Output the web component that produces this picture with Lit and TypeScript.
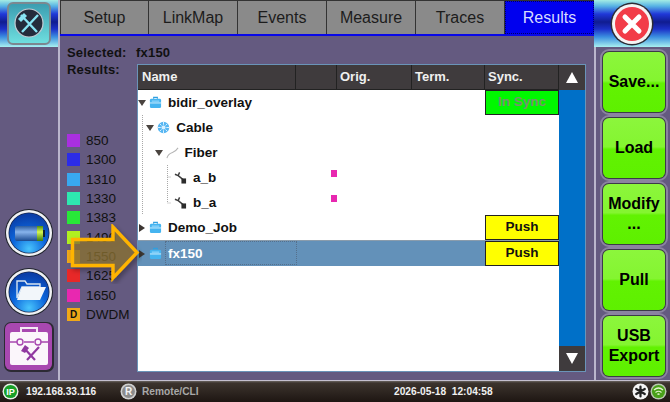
import {LitElement, html, css, svg} from 'lit';
import {customElement} from 'lit/decorators.js';

const TABS = ['Setup', 'LinkMap', 'Events', 'Measure', 'Traces', 'Results'];
const LEGEND = [
	['850', '#a930e0'],
	['1300', '#2c2ce8'],
	['1310', '#38a8f0'],
	['1330', '#2ee8b0'],
	['1383', '#28e838'],
	['1490', '#b0f020'],
	['1550', '#f0a818'],
	['1625', '#e82828'],
	['1650', '#e828b0'],
];
const ACTIONS = [['Save...'], ['Load'], ['Modify', '...'], ['Pull'], ['USB', 'Export']];

type Row = {
	name: string;
	level: number;
	kind: 'job' | 'cable' | 'fiber' | 'trace';
	open?: boolean;
	mark?: boolean;
	sync?: string;
	selected?: boolean;
};

const ROWS: Row[] = [
	{name: 'bidir_overlay', level: 0, kind: 'job', open: true, sync: 'In Sync'},
	{name: 'Cable', level: 1, kind: 'cable', open: true},
	{name: 'Fiber', level: 2, kind: 'fiber', open: true},
	{name: 'a_b', level: 3, kind: 'trace', mark: true},
	{name: 'b_a', level: 3, kind: 'trace', mark: true},
	{name: 'Demo_Job', level: 0, kind: 'job', open: false, sync: 'Push'},
	{name: 'fx150', level: 0, kind: 'job', open: false, sync: 'Push', selected: true},
];

const jobIcon = html`<svg class="node" viewBox="0 0 14 14">
	<path d="M5 3V1.500h4V3" fill="none" stroke="#2f9fe0" stroke-width="1.200" />
	<rect x="1" y="3" width="12" height="10" rx="1.500" fill="#45b4f0" />
	<rect x="1" y="7" width="12" height="1" fill="#d8f2ff" />
	<rect x="3" y="5" width="8" height="1" fill="#a8e0ff" />
</svg>`;
const cableIcon = html`<svg class="node" viewBox="0 0 14 14">
	<circle cx="7" cy="7" r="6.200" fill="#56b6f2" />
	<circle cx="7" cy="7" r="2.200" fill="#d8f0ff" />
	<path d="M7 1v3M7 10v3M1 7h3M10 7h3M2.800 2.800l2 2M9.200 9.200l2 2M11.200 2.800l-2 2M4.800 9.200l-2 2" stroke="#e4f4ff" stroke-width="1" />
</svg>`;
const fiberIcon = html`<svg class="node" viewBox="0 0 14 14">
	<path d="M1 13c1-4 3-5 6-6s4-2 6-5" fill="none" stroke="#b4b4b4" stroke-width="1.100" />
</svg>`;
const traceIcon = html`<svg class="node" viewBox="0 0 14 14">
	<path d="M1 3.500l3.500 1.500L6 1.500M4.500 5l5 4" fill="none" stroke="#3c3c3c" stroke-width="1.500" />
	<rect x="8" y="8" width="5" height="5.500" fill="#2c2c2c" />
</svg>`;
const ICONS = {job: jobIcon, cable: cableIcon, fiber: fiberIcon, trace: traceIcon};

const orb = (id: string, glyph: unknown) => html`<svg class="orb" viewBox="0 0 48 50">
	<defs>
		<radialGradient id=${id} cx="50%" cy="90%" r="85%">
			<stop offset="0" stop-color="#48c4fc" />
			<stop offset=".5" stop-color="#0c66dc" />
			<stop offset="1" stop-color="#0a3ea8" />
		</radialGradient>
	</defs>
	<circle cx="24" cy="25" r="24" fill="#20242c" />
	<circle cx="24" cy="25" r="23" fill="#f0f2f4" />
	<circle cx="24" cy="25" r="20.500" fill="#182850" />
	<circle cx="24" cy="25" r="19.700" fill="url(#${id})" />
	${glyph}
</svg>`;

const batteryGlyph = svg`
	<defs>
		<linearGradient id="cell" x1="0" y1="0" x2="0" y2="1">
			<stop offset="0" stop-color="#2a5ca0" />
			<stop offset=".4" stop-color="#88b4ec" />
			<stop offset="1" stop-color="#1a4a90" />
		</linearGradient>
		<linearGradient id="charge" x1="0" y1="0" x2="0" y2="1">
			<stop offset="0" stop-color="#4a8a10" />
			<stop offset=".4" stop-color="#d8f850" />
			<stop offset="1" stop-color="#3a7a10" />
		</linearGradient>
	</defs>
	<rect x="10" y="18" width="28" height="15" rx="2" fill="url(#cell)" />
	<rect x="32" y="18" width="6" height="15" fill="url(#charge)" />
	<rect x="38" y="22" width="2" height="7" fill="#123" />`;

const folderGlyph = svg`
	<path d="M12 31V14h8l2 3h13v3H17z" fill="none" stroke="#d8e4f0" stroke-width="1.400" />
	<path d="M12 33l5-13h24l-6 13z" fill="#f2f6fa" />`;

@customElement('app-root')
export class AppRoot extends LitElement {
	static styles = css`
		:host {
			display: grid;
			grid-template-rows: 380px 22px;
			width: 670px;
			height: 402px;
			position: relative;
			overflow: hidden;
			font-family: "Liberation Sans", Arial, sans-serif;
			background: #645a80;
			color: #000;
		}

		.body {
			display: grid;
			grid-template-columns: 60px 534px 76px;
			min-height: 0;
		}

		/* side columns */
		.left {
			display: flex;
			flex-direction: column;
			align-items: center;
			border-right: 2px solid #bab6cc;
		}
		.cap {
			align-self: stretch;
			height: 47px;
			flex: none;
			display: flex;
			align-items: center;
			justify-content: center;
			background: linear-gradient(#a4ece4 0, #58b4e4 6px, #2038d8 14px, #101c90 22px, #1c30c8 29px, #3c90e0 37px, #a8f0f0 47px);
		}
		.left .cap svg {
			width: 44px;
			height: 43px;
		}
		.orbs {
			margin-top: auto;
			display: flex;
			flex-direction: column;
			align-items: center;
			gap: 9px;
			margin-bottom: 7px;
		}
		.orb {
			width: 48px;
			height: 50px;
			display: block;
		}
		.toolbox {
			width: 52px;
			height: 52px;
			display: block;
			margin-top: -5px;
		}

		.right {
			display: flex;
			flex-direction: column;
		}
		.right .cap svg {
			width: 44px;
			height: 44px;
		}
		.actions {
			flex: 1;
			display: flex;
			flex-direction: column;
			padding: 2px 0 0 4px;
			border-left: 2px solid #bab6cc;
		}
		.action {
			width: 68px;
			height: 66px;
			flex: none;
			box-sizing: border-box;
			border: 2px solid #8b84a0;
			border-radius: 9px;
			padding: 1px;
			background: #3c3a48;
			display: flex;
		}
		.action span {
			flex: 1;
			border-radius: 6px;
			background: linear-gradient(#8cf63c 0, #84f530 48%, #62f202 52%, #5ef000 100%);
			display: flex;
			flex-direction: column;
			align-items: center;
			justify-content: center;
			font-size: 16px;
			line-height: 20px;
			font-weight: 700;
			text-align: center;
		}

		/* centre */
		.main {
			display: flex;
			flex-direction: column;
			min-width: 0;
		}
		.tabs {
			display: grid;
			grid-template-columns: repeat(6, 1fr);
			height: 33px;
			flex: none;
			border-top: 1px solid #333;
			border-bottom: 2px solid #0808e8;
		}
		.tab {
			display: flex;
			align-items: center;
			justify-content: center;
			background: #8a8a8a;
			border-right: 1px solid #333;
			font-size: 16px;
			color: #1c1c1c;
		}
		.tab:first-child {
			border-left: 1px solid #333;
		}
		.tab.on {
			background: #0000ee;
			color: #d8dcff;
			border: 1px dotted #000060;
		}
		.selected {
			display: flex;
			height: 15px;
			margin-top: 9px;
			padding-left: 7px;
			font-size: 13px;
			font-weight: 700;
			line-height: 15px;
			letter-spacing: .2px;
			color: #111;
		}
		.selected b {
			width: 69px;
		}
		.content {
			display: grid;
			grid-template-columns: 77px 449px;
			margin-top: 4px;
			min-height: 0;
		}
		.legend-col {
			padding-left: 7px;
		}
		.results {
			font-size: 13px;
			font-weight: 700;
			letter-spacing: .2px;
			line-height: 15px;
			margin-top: -2px;
			color: #111;
		}
		.legend {
			margin-top: 54px;
			display: flex;
			flex-direction: column;
		}
		.legend div {
			height: 19.300px;
			display: flex;
			align-items: center;
			gap: 6px;
			font-size: 13.500px;
			color: #111;
		}
		.swatch {
			width: 13px;
			height: 13px;
			flex: none;
			font-size: 10px;
			font-weight: 700;
			line-height: 13px;
			text-align: center;
		}

		/* table */
		.table {
			height: 308px;
			box-sizing: border-box;
			border: 1px solid #6a94b8;
			display: grid;
			grid-template-columns: 421px 26px;
			grid-template-rows: 25px 1fr;
			background: #fff;
		}
		.head {
			display: grid;
			grid-template-columns: 158px 41px 75px 73px 74px;
			background: #3f3b3d;
			color: #f0f0f0;
			font-size: 13px;
			font-weight: 700;
			line-height: 24px;
		}
		.head span {
			padding-left: 3px;
			border-right: 1px solid #222;
			border-bottom: 1px solid #222;
		}
		.head span:first-child {
			padding-left: 4px;
		}
		.up, .down {
			background: #3f3b3d;
			display: flex;
			align-items: center;
			justify-content: center;
		}
		.up i, .down i {
			width: 0;
			height: 0;
			border-left: 6.500px solid transparent;
			border-right: 6.500px solid transparent;
		}
		.up i {
			border-bottom: 11px solid #fff;
		}
		.down i {
			border-top: 11px solid #fff;
		}
		.tree {
			position: relative;
			min-height: 0;
		}
		.guides {
			position: absolute;
			left: 0;
			top: 0;
			width: 40px;
			height: 130px;
			pointer-events: none;
		}
		.row {
			display: grid;
			grid-template-columns: 158px 41px 1fr 74px;
			height: 25px;
			align-items: stretch;
		}
		.row.sel {
			background: #6391b9;
			color: #fff;
			border-top: 1px solid #8a9cac;
		}
		.name {
			display: flex;
			align-items: center;
			font-size: 13.500px;
			font-weight: 700;
			color: #111;
			position: relative;
		}
		.sel .name {
			color: #fff;
		}
		.sel .name::after {
			content: "";
			position: absolute;
			left: 27px;
			right: -1px;
			top: 0;
			bottom: 1px;
			border: 1px dotted #55708c;
		}
		.twist {
			width: 0;
			height: 0;
			flex: none;
			margin-right: 3px;
		}
		.twist.open {
			border-left: 4px solid transparent;
			border-right: 4px solid transparent;
			border-top: 6px solid #4a4440;
		}
		.twist.shut {
			margin-left: 1px;
			margin-right: 4px;
			border-top: 4.500px solid transparent;
			border-bottom: 4.500px solid transparent;
			border-left: 6px solid #3c3632;
		}
		.node {
			width: 13px;
			height: 13px;
			flex: none;
			margin-right: 6px;
		}
		.markcell {
			display: flex;
			justify-content: flex-end;
			align-items: center;
		}
		.mark {
			width: 6px;
			height: 7px;
			background: #e828b0;
			margin-bottom: 8px;
		}
		.sync {
			box-sizing: border-box;
			border: 1px solid #222;
			text-align: center;
			font-size: 13.500px;
			font-weight: 700;
			line-height: 22px;
		}
		.sync.push {
			background: #ffff00;
			color: #111;
		}
		.sync.ok {
			background: #00f800;
			color: #789070;
		}
		.bar {
			background: #0070c8;
			display: flex;
			flex-direction: column;
			justify-content: flex-end;
		}
		.down {
			height: 25px;
		}

		/* pointer laid over the legend */
		.arrow {
			position: absolute;
			left: 68px;
			top: 224px;
			width: 74px;
			height: 60px;
		}

		/* status strip */
		.status {
			background: linear-gradient(#6a6460 0, #3c342e 2px, #1e1612 100%);
			border-top: 1px solid #c4c0d0;
			display: flex;
			align-items: center;
			font-size: 10.200px;
			font-weight: 700;
			color: #f0f0f0;
			padding-left: 2px;
			box-sizing: border-box;
		}
		.status svg {
			width: 17px;
			height: 17px;
			flex: none;
		}
		.ip {
			margin-left: 7px;
			width: 94px;
		}
		.remote {
			margin-left: 5px;
			width: 252px;
			color: #a8a8a8;
		}
		.clock {
			width: 238px;
		}
		.status .end {
			margin-left: 1px;
		}
	`;

	renderRow(r: Row) {
		const twist = r.kind === 'trace' ? 11 : 0;
		return html`<div class="row ${r.selected ? 'sel' : ''}">
			<div class="name" style="padding-left: ${r.level * 8.3 + twist}px">
				${r.kind === 'trace' ? '' : html`<i class="twist ${r.open ? 'open' : 'shut'}"></i>`}
				${ICONS[r.kind]}
				<span>${r.name}</span>
			</div>
			<div class="markcell">${r.mark ? html`<i class="mark"></i>` : ''}</div>
			<div></div>
			${r.sync
				? html`<div class="sync ${r.sync === 'Push' ? 'push' : 'ok'}">${r.sync}</div>`
				: html`<div></div>`}
		</div>`;
	}

	render() {
		return html`
			<div class="body">
				<div class="left">
					<div class="cap">
						<svg viewBox="0 0 44 43">
							<defs>
								<linearGradient id="tile" x1="0" y1="0" x2="0" y2="1">
									<stop offset="0" stop-color="#3a9cb0" />
									<stop offset="1" stop-color="#70e0e0" />
								</linearGradient>
							</defs>
							<rect x="1" y="1" width="42" height="41" rx="5" fill="url(#tile)" stroke="#7c8890" stroke-width="2" />
							<circle cx="22" cy="21" r="14" fill="#242c3c" stroke="#c4ccd4" stroke-width="1.200" />
							<path d="M14 13l16 17M31 13L15 30" stroke="#88e4f4" stroke-width="2.400" />
							<path d="M11 17l6-6 3 3-6 6z" fill="#88e4f4" />
						</svg>
					</div>
					<div class="orbs">
						${orb('orb-a', batteryGlyph)}
						${orb('orb-b', folderGlyph)}
						<svg class="toolbox" viewBox="0 0 52 52">
							<rect x="1" y="1" width="50" height="50" rx="7" fill="#2c2a34" />
							<rect x="2" y="2" width="47" height="47" rx="6" fill="#a848b0" />
							<path d="M18 11V7h16v4" fill="none" stroke="#f4e8f4" stroke-width="2" />
							<rect x="7" y="11" width="38" height="33" rx="2" fill="#fbf6fb" />
							<path d="M7 21h7M21 21h10M38 21h7" stroke="#a848b0" stroke-width="1.400" />
							<circle cx="17" cy="21" r="3" fill="none" stroke="#a848b0" stroke-width="1.400" />
							<circle cx="35" cy="21" r="3" fill="none" stroke="#a848b0" stroke-width="1.400" />
							<path d="M21 27l11 12M36 26L24 39" stroke="#9038a0" stroke-width="2.200" />
							<path d="M18 30l4-6 4 3-4 5z" fill="#9038a0" />
						</svg>
					</div>
				</div>

				<div class="main">
					<div class="tabs">
						${TABS.map((t) => html`<div class="tab ${t === 'Results' ? 'on' : ''}">${t}</div>`)}
					</div>
					<div class="selected"><b>Selected:</b><span>fx150</span></div>
					<div class="content">
						<div class="legend-col">
							<div class="results">Results:</div>
							<div class="legend">
								${LEGEND.map(([label, color]) => html`<div>
									<i class="swatch" style="background: ${color}"></i>${label}
								</div>`)}
								<div><i class="swatch" style="background: #f0a818; font-style: normal">D</i>DWDM</div>
							</div>
						</div>
						<div class="table">
							<div class="head">
								<span>Name</span><span></span><span>Orig.</span><span>Term.</span><span>Sync.</span>
							</div>
							<div class="up"><i></i></div>
							<div class="tree">
								<svg class="guides" viewBox="0 0 40 130">
									<path d="M4.500 25V125M29.500 75V113M29.500 87H33M29.500 113H33" fill="none" stroke="#a8a8a8" stroke-dasharray="1 1" />
								</svg>
								${ROWS.map((r) => this.renderRow(r))}
							</div>
							<div class="bar"><div class="down"><i></i></div></div>
						</div>
					</div>
				</div>

				<div class="right">
					<div class="cap">
						<svg viewBox="0 0 44 44">
							<circle cx="22" cy="22" r="21.500" fill="#2c2c34" />
							<circle cx="22" cy="22" r="20" fill="#f4f4f4" />
							<circle cx="22" cy="22" r="17" fill="#f23c48" />
							<path d="M15 15l14 14M29 15L15 29" stroke="#fff" stroke-width="5" stroke-linecap="round" />
						</svg>
					</div>
					<div class="actions">
						${ACTIONS.map((lines) => html`<div class="action"><span>
							${lines.map((l) => html`<div>${l}</div>`)}
						</span></div>`)}
					</div>
				</div>
			</div>

			<div class="status">
				<svg viewBox="0 0 17 17">
					<circle cx="8.500" cy="8.500" r="8" fill="#e8f0e8" />
					<circle cx="8.500" cy="8.500" r="6.600" fill="#18a028" />
					<text x="8.500" y="12" text-anchor="middle" font-size="9" font-weight="700" fill="#fff">IP</text>
				</svg>
				<span class="ip">192.168.33.116</span>
				<svg viewBox="0 0 17 17">
					<circle cx="8.500" cy="8.500" r="8" fill="#d0d0d0" />
					<circle cx="8.500" cy="8.500" r="6.400" fill="#8c8c8c" />
					<text x="8.500" y="12" text-anchor="middle" font-size="10" font-weight="700" fill="#f4f4f4">R</text>
				</svg>
				<span class="remote">Remote/CLI</span>
				<span class="clock">2026-05-18&nbsp; 12:04:58</span>
				<svg viewBox="0 0 17 17">
					<circle cx="8.500" cy="8.500" r="8" fill="#f4f4f4" />
					<path d="M8.500 3.500v10M4.200 6l8.600 5M12.800 6l-8.600 5" stroke="#222" stroke-width="2.200" stroke-linecap="round" />
				</svg>
				<svg class="end" viewBox="0 0 17 17">
					<circle cx="8.500" cy="8.500" r="8" fill="#b8c8b0" />
					<circle cx="8.500" cy="8.500" r="6.600" fill="#48a018" />
					<path d="M4 7q4.500-4 9 0M5.500 9.500q3-2.500 6 0M7.500 11.500q1-1 2 0" fill="none" stroke="#e4f4d0" stroke-width="1.200" />
				</svg>
			</div>

			<svg class="arrow" viewBox="0 0 74 60">
				<defs>
					<filter id="soft" x="-20%" y="-20%" width="140%" height="140%">
						<feDropShadow dx="2" dy="3" stdDeviation="2.500" flood-color="#000" flood-opacity=".35" />
					</filter>
				</defs>
				<path d="M4.500 15.500H45V3L69 28.500 45 54V41.500H4.500z" fill="#8e7430" fill-opacity=".72" stroke="#ffb400" stroke-width="3.400" filter="url(#soft)" />
			</svg>
		`;
	}
}
